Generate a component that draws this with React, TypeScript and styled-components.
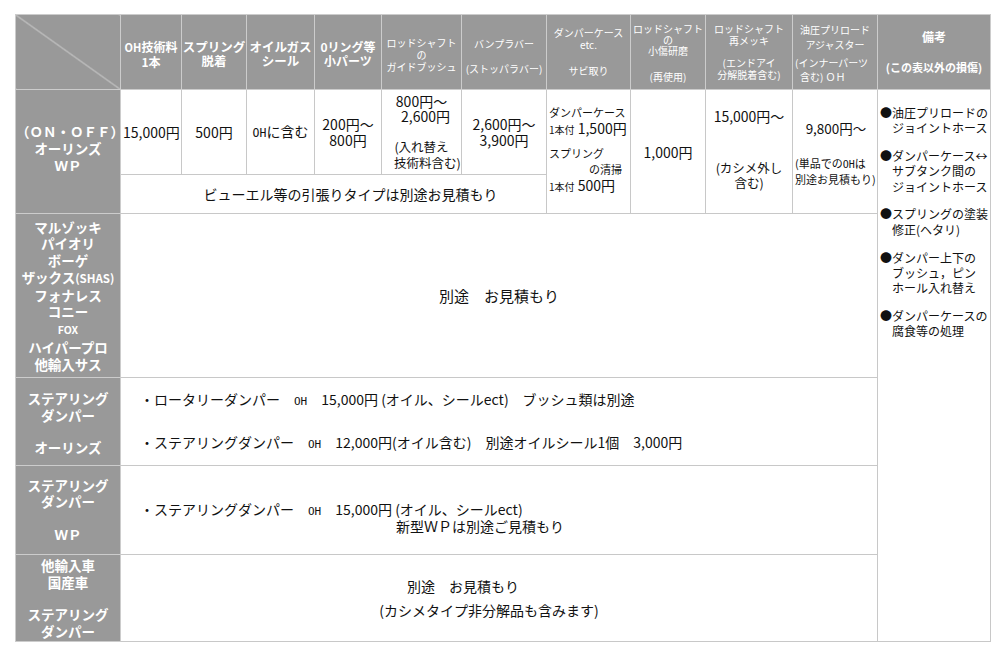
import styled, { createGlobalStyle } from "styled-components";

const GlobalStyle = createGlobalStyle`
  html, body {
    margin: 0;
    padding: 0;
    background: #ffffff;
  }
  body {
    font-family: "Noto Sans CJK JP", "Noto Sans", sans-serif;
  }
`;

const Page = styled.div`
  padding: 14px 0 0 15px;
`;

const PriceTable = styled.table`
  border-collapse: collapse;
  table-layout: fixed;
  width: 975px;
  color: #111111;
`;

const Col = styled.col<{ $w: number }>`
  width: ${(p) => p.$w}px;
`;

const Row = styled.tr<{ $h: number }>`
  height: ${(p) => p.$h}px;
`;

const HeadCell = styled.th<{
  $size?: number;
  $bold?: boolean;
  $lh?: number;
  $pt?: number;
}>`
  background: #999999;
  color: #ffffff;
  border: 1px solid #cccccc;
  padding: ${(p) => p.$pt ?? 0}px 0 0;
  font-size: ${(p) => p.$size ?? 10}px;
  font-weight: ${(p) => (p.$bold ? 700 : 400)};
  line-height: ${(p) => p.$lh ?? 12}px;
  text-align: center;
  vertical-align: middle;
  white-space: nowrap;
`;

const CornerCell = styled(HeadCell)`
  background: linear-gradient(
    to top right,
    #999999 calc(50% - 0.7px),
    #dddddd 50%,
    #999999 calc(50% + 0.7px)
  );
`;

const SideCell = styled.th<{ $lh?: number; $pt?: number; $pb?: number }>`
  background: #999999;
  color: #ffffff;
  border: 1px solid #cccccc;
  padding: ${(p) => p.$pt ?? 0}px 0 ${(p) => p.$pb ?? 0}px;
  font-size: 13.5px;
  font-weight: 700;
  line-height: ${(p) => p.$lh ?? 16.5}px;
  text-align: center;
  vertical-align: middle;
  white-space: nowrap;
`;

const Cell = styled.td<{
  $align?: "left" | "center";
  $size?: number;
  $lh?: number;
  $pad?: string;
}>`
  border: 1px solid #c8c8c8;
  padding: ${(p) => p.$pad ?? "0 2px"};
  font-size: ${(p) => p.$size ?? 14}px;
  line-height: ${(p) => p.$lh ?? 16}px;
  text-align: ${(p) => p.$align ?? "center"};
  vertical-align: middle;
  white-space: nowrap;
`;

const RemarkCell = styled.td`
  border: 1px solid #c8c8c8;
  vertical-align: top;
  padding: 15px 0 0 2px;
  font-size: 12px;
  line-height: 15.3px;
  white-space: nowrap;
  color: #111111;
`;

const RemarkItem = styled.div`
  margin-bottom: 12.5px;
  padding-left: 12px;
  text-indent: -12px;
`;

const Line = styled.span<{
  $size?: number;
  $lh?: number;
  $indent?: number;
  $align?: "left" | "center";
  $shift?: number;
}>`
  display: block;
  font-size: ${(p) => (p.$size ? `${p.$size}px` : "inherit")};
  line-height: ${(p) => (p.$lh ? `${p.$lh}px` : "inherit")};
  padding-left: ${(p) => p.$indent ?? 0}px;
  margin-right: ${(p) => p.$shift ?? 0}px;
  text-align: ${(p) => p.$align ?? "inherit"};
`;

const Gap = styled.span<{ $h: number }>`
  display: block;
  height: ${(p) => p.$h}px;
`;

const Small = styled.span<{ $size: number; $bold?: boolean }>`
  font-size: ${(p) => p.$size}px;
  font-weight: ${(p) => (p.$bold ? 700 : "inherit")};
`;

const Mono = styled.span<{ $size?: number }>`
  font-family: "DejaVu Sans Mono", "Liberation Mono", monospace;
  font-size: ${(p) => p.$size ?? 11}px;
`;

const widths = [105, 61, 65, 68, 67, 80, 85, 84, 75, 87, 85, 113];

export default function App() {
  return (
    <>
      <GlobalStyle />
      <Page>
        <PriceTable>
          <colgroup>
            {widths.map((w, i) => (
              <Col key={i} $w={w} />
            ))}
          </colgroup>
          <tbody>
            <Row $h={75}>
              <CornerCell />
              <HeadCell $bold $size={12} $lh={13.5} $pt={4}>
                <Small $size={11} $bold={false}>OH</Small>技術料
                <br />
                1本
              </HeadCell>
              <HeadCell $bold $size={12.5} $lh={14} $pt={3}>
                スプリング
                <br />
                脱着
              </HeadCell>
              <HeadCell $bold $size={12.5} $lh={14} $pt={3}>
                オイルガス
                <br />
                シール
              </HeadCell>
              <HeadCell $bold $size={12} $lh={14} $pt={3}>
                0リング等
                <br />
                小パーツ
              </HeadCell>
              <HeadCell $size={10} $lh={12} $pt={6}>
                ロッドシャフト
                <br />
                の
                <br />
                ガイドブッシュ
              </HeadCell>
              <HeadCell $size={10} $lh={12} $pt={8}>
                バンプラバー
                <Gap $h={13} />
                (ストッパラバー)
              </HeadCell>
              <HeadCell $size={10} $lh={12.5}>
                ダンパーケース
                <br />
                etc.
                <Gap $h={13} />
                サビ取り
              </HeadCell>
              <HeadCell $size={10} $lh={11} $pt={1}>
                ロッドシャフト
                <br />
                の
                <br />
                小傷研磨
                <Gap $h={15} />
                (再使用)
              </HeadCell>
              <HeadCell $size={10} $lh={12}>
                ロッドシャフト
                <br />
                再メッキ
                <Gap $h={10} />
                (エンドアイ
                <br />
                分解脱着含む)
              </HeadCell>
              <HeadCell $size={10} $lh={14.5} $pt={4}>
                油圧プリロード
                <br />
                アジャスター
                <Gap $h={3.5} />
                <Line $align="left" $indent={2}>
                  (インナーパーツ
                </Line>
                <Line $align="left" $indent={7}>
                  含む) ＯＨ
                </Line>
              </HeadCell>
              <HeadCell $bold $size={12} $lh={14}>
                備考
                <Gap $h={16} />
                <Small $size={11} $bold>
                  (この表以外の損傷)
                </Small>
              </HeadCell>
            </Row>

            <Row $h={85}>
              <SideCell rowSpan={2} $lh={17} $pb={6}>
                （ＯＮ・ＯＦＦ）
                <br />
                オーリンズ
                <br />
                ＷＰ
              </SideCell>
              <Cell>15,000円</Cell>
              <Cell>500円</Cell>
              <Cell>
                <Mono $size={11.5}>OH</Mono>に含む
              </Cell>
              <Cell>
                200円～
                <br />
                800円
              </Cell>
              <Cell $lh={15.5}>
                800円～
                <br />
                <Line $indent={8}>2,600円</Line>
                <Gap $h={14.5} />
                <Line $size={12.5}>(入れ替え</Line>
                <Line $size={12.5} $indent={10}>
                  技術料含む)
                </Line>
              </Cell>
              <Cell>
                2,600円～
                <br />
                3,900円
              </Cell>
              <Cell rowSpan={2} $align="left" $pad="0 0 5px 2px">
                <Line $size={11}>ダンパーケース</Line>
                <Line>
                  <Small $size={10}>1本付</Small> 1,500円
                </Line>
                <Gap $h={7} />
                <Line $size={11}>スプリング</Line>
                <Line $size={11} $indent={40}>
                  の清掃
                </Line>
                <Line>
                  <Small $size={10}>1本付</Small> 500円
                </Line>
              </Cell>
              <Cell rowSpan={2}>1,000円</Cell>
              <Cell rowSpan={2} $pad="0 2px 5px">
                15,000円～
                <Gap $h={37.5} />
                <Line $size={12.5} $lh={14.5}>
                  (カシメ外し
                </Line>
                <Line $size={12.5} $lh={14.5}>
                  含む)
                </Line>
              </Cell>
              <Cell rowSpan={2} $pad="3.5px 0 0 2px">
                <Line $size={13.5}>9,800円～</Line>
                <Gap $h={19.5} />
                <Line $size={11} $lh={15} $align="left">
                  (単品での<Mono $size={10}>OH</Mono>は
                </Line>
                <Line $size={11} $lh={15} $align="left">
                  別途お見積もり)
                </Line>
              </Cell>
              <RemarkCell rowSpan={6}>
                <RemarkItem>
                  ●油圧プリロードの
                  <br />
                  ジョイントホース
                </RemarkItem>
                <RemarkItem>
                  ●ダンパーケース↔
                  <br />
                  サブタンク間の
                  <br />
                  ジョイントホース
                </RemarkItem>
                <RemarkItem>
                  ●スプリングの塗装
                  <br />
                  修正(ヘタリ)
                </RemarkItem>
                <RemarkItem>
                  ●ダンパー上下の
                  <br />
                  ブッシュ，ピン
                  <br />
                  ホール入れ替え
                </RemarkItem>
                <RemarkItem>
                  ●ダンパーケースの
                  <br />
                  腐食等の処理
                </RemarkItem>
              </RemarkCell>
            </Row>

            <Row $h={39}>
              <Cell colSpan={6} $pad="0 0 0 34px">
                ビューエル等の引張りタイプは別途お見積もり
              </Cell>
            </Row>

            <Row $h={164}>
              <SideCell $lh={16.75}>
                マルゾッキ
                <br />
                パイオリ
                <br />
                ボーゲ
                <br />
                ザックス<Small $size={11.5}>(SHAS)</Small>
                <br />
                フォナレス
                <br />
                コニー
                <br />
                <Small $size={10.5}>FOX</Small>
                <br />
                ハイパープロ
                <br />
                他輸入サス
              </SideCell>
              <Cell colSpan={10} $size={15}>
                別途　お見積もり
              </Cell>
            </Row>

            <Row $h={88}>
              <SideCell $pt={2}>
                ステアリング
                <br />
                ダンパー
                <Gap $h={15.5} />
                オーリンズ
              </SideCell>
              <Cell colSpan={10} $align="left" $pad="0 0 0 19px">
                <Line>
                  ・ロータリーダンパー　<Mono>OH</Mono>　15,000円 (オイル、シールect)　ブッシュ類は別途
                </Line>
                <Gap $h={24} />
                <Line>
                  ・ステアリングダンパー　<Mono>OH</Mono>　12,000円(オイル含む)　別途オイルシール1個　3,000円
                </Line>
              </Cell>
            </Row>

            <Row $h={89}>
              <SideCell $lh={15.5}>
                ステアリング
                <br />
                ダンパー
                <Gap $h={17.5} />
                ＷＰ
              </SideCell>
              <Cell colSpan={10} $align="left" $lh={15} $pad="16px 0 0 19px">
                <Line>
                  ・ステアリングダンパー　<Mono>OH</Mono>　15,000円 (オイル、シールect)
                </Line>
                <Line $indent={256}>新型ＷＰは別途ご見積もり</Line>
              </Cell>
            </Row>

            <Row $h={87}>
              <SideCell>
                他輸入車
                <br />
                国産車
                <Gap $h={16} />
                ステアリング
                <br />
                ダンパー
              </SideCell>
              <Cell colSpan={10}>
                <Line $shift={72}>別途　お見積もり</Line>
                <Gap $h={8} />
                <Line $shift={20}>(カシメタイプ非分解品も含みます)</Line>
              </Cell>
            </Row>
          </tbody>
        </PriceTable>
      </Page>
    </>
  );
}
